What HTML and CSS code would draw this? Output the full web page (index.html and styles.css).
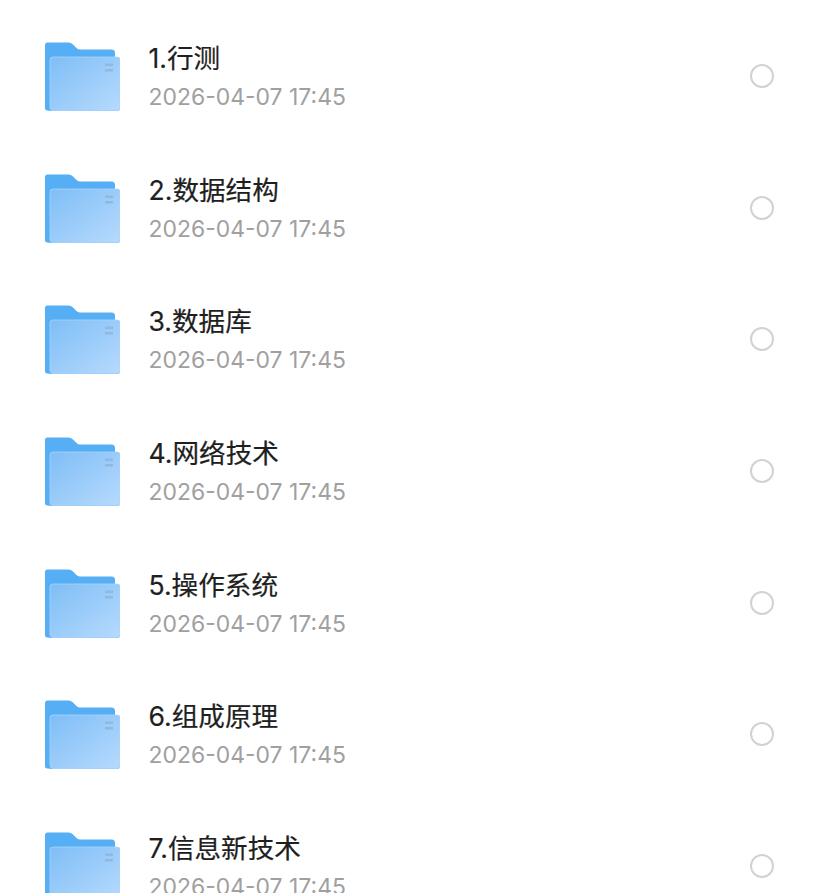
FILE: index.html
```html
<!DOCTYPE html>
<html>
<head>
<meta charset="utf-8">
<title>Files</title>
<link rel="stylesheet" href="styles.css">
</head>
<body>
<svg class="defs" width="0" height="0">
  <defs>
    <linearGradient id="front" x1="0" y1="0" x2="1" y2="1">
      <stop offset="0" stop-color="#7fbef6"/>
      <stop offset="1" stop-color="#b6dafd"/>
    </linearGradient>
    <symbol id="folder" viewBox="0 0 75 69">
      <path d="M2.500 0.500H23.500Q26 0.500 28 2.500L31.500 6Q33 7.500 35.500 7.500H66.500Q70 7.500 70 11V20H5V68.500H2.500Q0 68.500 0 66V3Q0 0.500 2.500 0.500Z" fill="#56aef4"/>
      <rect x="3" y="15" width="72" height="54" rx="3" fill="#56aef4"/>
      <rect x="5" y="15" width="70" height="53.500" rx="3" fill="url(#front)" stroke="#a9d4fb" stroke-width="0.8"/>
      <rect x="60" y="21.500" width="8" height="2.500" fill="#8fb9e2"/>
      <rect x="60" y="27" width="8" height="2.500" fill="#8fb9e2"/>
    </symbol>
  </defs>
</svg>
<div class="list">
  <div class="row">
    <svg class="folder"><use href="#folder"/></svg>
    <div class="info"><div class="name">1.行测</div><div class="date">2026-04-07 17:45</div></div>
    <span class="radio"></span>
  </div>
  <div class="row">
    <svg class="folder"><use href="#folder"/></svg>
    <div class="info"><div class="name">2.数据结构</div><div class="date">2026-04-07 17:45</div></div>
    <span class="radio"></span>
  </div>
  <div class="row">
    <svg class="folder"><use href="#folder"/></svg>
    <div class="info"><div class="name">3.数据库</div><div class="date">2026-04-07 17:45</div></div>
    <span class="radio"></span>
  </div>
  <div class="row">
    <svg class="folder"><use href="#folder"/></svg>
    <div class="info"><div class="name">4.网络技术</div><div class="date">2026-04-07 17:45</div></div>
    <span class="radio"></span>
  </div>
  <div class="row">
    <svg class="folder"><use href="#folder"/></svg>
    <div class="info"><div class="name">5.操作系统</div><div class="date">2026-04-07 17:45</div></div>
    <span class="radio"></span>
  </div>
  <div class="row">
    <svg class="folder"><use href="#folder"/></svg>
    <div class="info"><div class="name">6.组成原理</div><div class="date">2026-04-07 17:45</div></div>
    <span class="radio"></span>
  </div>
  <div class="row">
    <svg class="folder"><use href="#folder"/></svg>
    <div class="info"><div class="name">7.信息新技术</div><div class="date">2026-04-07 17:45</div></div>
    <span class="radio"></span>
  </div>
</div>
</body>
</html>
```
FILE: styles.css
```css
html,body{margin:0;padding:0;background:#fff}
body{height:893px;overflow:hidden;font-family:"Inter","Noto Sans CJK SC",sans-serif}
.defs{display:block;height:0}
.list{padding:10.3px 54px 0 45px}
.row{display:flex;align-items:center;height:131.67px}
.folder{width:75px;height:69px;flex:none;margin-top:1px}
.info{flex:1;margin-left:28.5px}
.name{font-size:26.6px;line-height:34px;color:#1f1f1f;-webkit-text-stroke:0.2px #1f1f1f}
.date{font-size:22.95px;line-height:28px;margin-top:8px;color:#a0a0a0}
.radio{width:24px;height:24px;border:2px solid #d2d2d2;border-radius:50%;box-sizing:border-box;flex:none}
```
